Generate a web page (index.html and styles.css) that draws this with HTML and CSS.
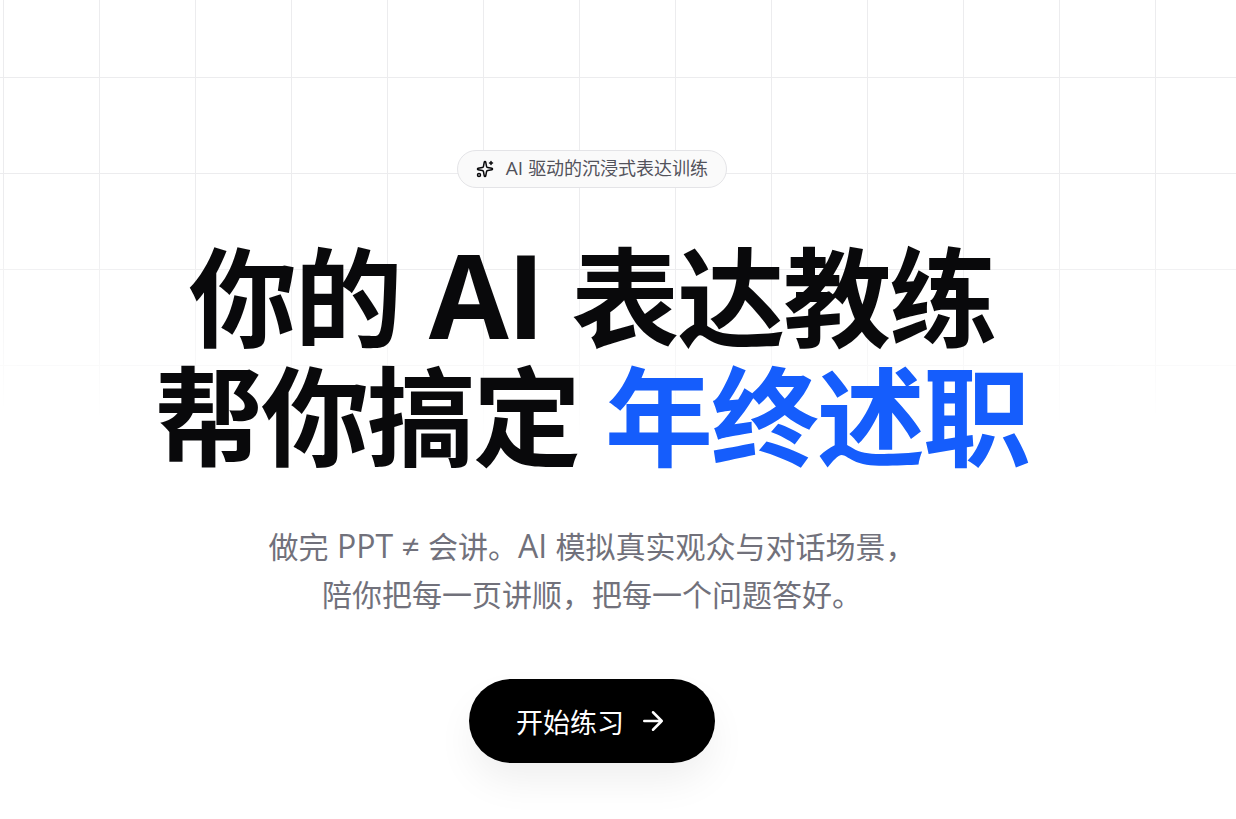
FILE: index.html
```html
<!DOCTYPE html>
<html lang="zh-CN">
<head>
<meta charset="utf-8">
<title>AI 表达教练</title>
<link rel="stylesheet" href="styles.css">
</head>
<body>
<main class="hero">
  <p class="badge">
    <svg class="badge-icon" viewBox="0 0 24 24" aria-hidden="true"><path d="M11.017 2.814a1 1 0 0 1 1.966 0l1.051 5.558a2 2 0 0 0 1.594 1.594l5.558 1.051a1 1 0 0 1 0 1.966l-5.558 1.051a2 2 0 0 0-1.594 1.594l-1.051 5.558a1 1 0 0 1-1.966 0l-1.051-5.558a2 2 0 0 0-1.594-1.594l-5.558-1.051a1 1 0 0 1 0-1.966l5.558-1.051a2 2 0 0 0 1.594-1.594zM20 2v4M22 4h-4"/><circle cx="4" cy="20" r="2"/></svg>
    <span class="badge-text"><span class="latin">AI </span>驱动的沉浸式表达训练</span>
  </p>
  <h1 class="title">你的<span class="latin"> AI </span>表达教练<br>帮你搞定 <span class="accent">年终述职</span></h1>
  <p class="lead">做完<span class="latin"> PPT ≠ </span>会讲。<span class="latin">AI </span>模拟真实观众与对话场景，<br>陪你把每一页讲顺，把每一个问题答好。</p>
  <button class="cta" type="button">开始练习
    <svg class="cta-icon" viewBox="0 0 24 24" aria-hidden="true"><path d="M5 12h14M12 5l7 7-7 7"/></svg>
  </button>
</main>
</body>
</html>
```
FILE: styles.css
```css
* { box-sizing: border-box; margin: 0; }
body {
  min-height: 100vh;
  background: #fff;
  color: #09090b;
  font-family: "Open Sans", "Noto Sans CJK SC", sans-serif;
}
.hero {
  position: relative;
  display: flex;
  flex-direction: column;
  align-items: center;
  min-height: 100vh;
  padding: 150px 52px 56px 0;
}
.hero::before {
  content: "";
  position: absolute;
  inset: 0;
  z-index: -1;
  background-image:
    linear-gradient(to right, #ececee 1px, transparent 1px),
    linear-gradient(to bottom, #ececee 1px, transparent 1px);
  background-size: 96px 96px;
  background-position: 3px 77px;
  mask-image: radial-gradient(ellipse 140% 440px at 50% 0, #000 58%, transparent 100%);
}
.badge {
  display: flex;
  align-items: center;
  gap: 12px;
  height: 38px;
  padding: 0 18px;
  border: 1px solid #e4e4e7;
  border-radius: 19px;
  background: #fafafa;
  color: #52525b;
  font-size: 18px;
  line-height: 24px;
}
.badge-text { padding-bottom: 3px; }
.badge .latin { font-size: 19px; }
.badge-icon { width: 18px; height: 18px; color: #09090b; }
svg { fill: none; stroke: currentColor; stroke-width: 2; stroke-linecap: round; stroke-linejoin: round; }
.title {
  margin-top: 47px;
  font-size: 108px;
  line-height: 119px;
  font-weight: 700;
  letter-spacing: -2px;
  text-align: center;
}
.title .latin { font-size: 116px; }
.accent { color: #155dfc; }
.lead {
  margin-top: 46px;
  color: #71717b;
  font-size: 30px;
  line-height: 48px;
  text-align: center;
}
.lead .latin { font-size: 32px; }
.cta {
  display: flex;
  align-items: center;
  gap: 14px;
  height: 84px;
  margin-top: 60px;
  padding: 0 47px;
  border: 0;
  border-radius: 42px;
  background: #000;
  color: #fff;
  font: 400 27px "Open Sans", "Noto Sans CJK SC", sans-serif;
  box-shadow: 0 20px 40px -4px #00000012;
}
.cta-icon { width: 30px; height: 30px; }
```
